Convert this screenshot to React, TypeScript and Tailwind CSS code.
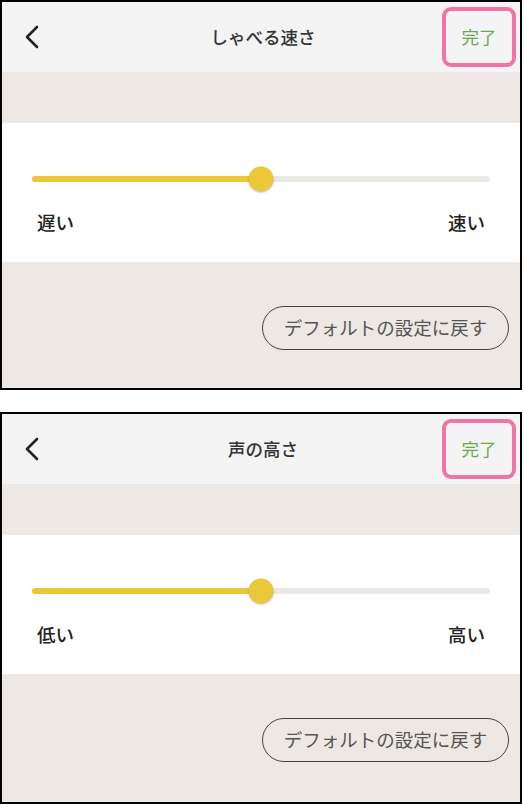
const font = { fontFamily: '"Noto Sans CJK JP", "Noto Sans", sans-serif' };

type PanelProps = {
  title: string;
  low: string;
  high: string;
  height: string;
};

const Panel = ({ title, low, high, height }: PanelProps) => {
  return (
    <section className={`flex flex-col border-2 border-black bg-[#ede8e4] ${height}`}>
      <header className="flex h-[70px] items-center justify-between bg-[#f4f4f4] pl-[20px] pr-[4px]">
        <svg width="20" height="26" viewBox="0 0 20 26" className="text-[#222]">
          <path d="M15 3 L5 13 L15 23" fill="none" stroke="currentColor" strokeWidth="2.6" strokeLinecap="round" strokeLinejoin="round" />
        </svg>
        <h1 className="ml-[42px] text-[17.5px] font-medium text-[#333]">{title}</h1>
        <div className="flex h-[60px] w-[74px] items-center justify-center rounded-[9px] border-4 border-[#f075a6]">
          <span className="text-[17.5px] text-[#6aa84f]">完了</span>
        </div>
      </header>
      <div className="h-[51px]" />
      <div className="flex h-[139px] flex-col bg-white px-[30px] pt-[53px]">
        <div className="relative h-[6px] rounded-full bg-[#ece8e4]">
          <div className="h-full w-1/2 rounded-full bg-[#ebc83a]" />
          <div className="absolute left-1/2 top-1/2 h-[25px] w-[25px] -translate-x-1/2 -translate-y-1/2 rounded-full bg-[#ebc83a] shadow-[0_1px_2px_rgba(0,0,0,0.25)]" />
        </div>
        <div className="mt-[27px] flex justify-between px-[5px] text-[18.5px] font-medium text-[#222]">
          <span>{low}</span>
          <span>{high}</span>
        </div>
      </div>
      <div className="flex flex-1 justify-end pr-[11px] pt-[44px]">
        <button className="h-[44px] w-[247px] rounded-full border-[1.5px] border-[#444] text-[18.5px] text-[#555]">
          デフォルトの設定に戻す
        </button>
      </div>
    </section>
  );
};

const App = () => {
  return (
    <div className="flex w-[524px] flex-col gap-[22px] bg-white pr-[2px]" style={font}>
      <Panel title="しゃべる速さ" low="遅い" high="速い" height="h-[390px]" />
      <Panel title="声の高さ" low="低い" high="高い" height="h-[392px]" />
    </div>
  );
};

export default App;
